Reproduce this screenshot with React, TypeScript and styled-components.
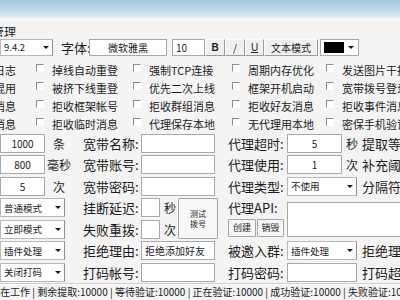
import React from 'react'
import styled, { createGlobalStyle } from 'styled-components'

const FONT = '"Noto Sans CJK SC", "Noto Sans", sans-serif'

const GlobalStyle = createGlobalStyle`
  html, body {
    margin: 0;
    padding: 0;
  }
  body {
    width: 400px;
    height: 300px;
    overflow: hidden;
    background: #f4f4f4;
    font-family: ${FONT};
    color: #1c1c1c;
  }
`

const Window = styled.div`
  width: 400px;
  height: 300px;
  overflow: hidden;
  display: flex;
  flex-direction: column;
`

const TitleBar = styled.div`
  flex: none;
  height: 18px;
  background: linear-gradient(to bottom, #a7c8e0 0%, #bdd7ea 50%, #e4eef6 100%);
`

// text whose start is cut by the window's left edge
const Clipped = styled.div<{ $w: number }>`
  width: ${(p) => p.$w}px;
  display: flex;
  justify-content: flex-end;
  overflow: hidden;
  white-space: nowrap;
`

const GroupTitle = styled(Clipped)`
  margin-top: 7px;
  height: 14px;
  line-height: 14px;
  font-size: 12px;
`

const Toolbar = styled.div`
  margin-top: 2px;
  height: 17px;
  display: flex;
  align-items: stretch;
`

const ToolCaption = styled.div`
  width: 28px;
  margin-left: 8px;
  font-size: 13px;
  line-height: 17px;
  white-space: nowrap;
`

const Field = styled.div<{ $w: number; $h?: number; $center?: boolean; $ml?: number }>`
  box-sizing: border-box;
  flex: none;
  width: ${(p) => p.$w}px;
  height: ${(p) => p.$h ?? 19}px;
  margin-left: ${(p) => p.$ml ?? 0}px;
  padding: 0 3px;
  display: flex;
  align-items: center;
  justify-content: ${(p) => (p.$center ? 'center' : 'flex-start')};
  background: #fff;
  border: 1px solid #a9a9a9;
  font-size: 10px;
  white-space: nowrap;
  overflow: hidden;
`

const ComboBox = styled.div<{ $w: number; $h?: number }>`
  box-sizing: border-box;
  flex: none;
  width: ${(p) => p.$w}px;
  height: ${(p) => p.$h ?? 19}px;
  padding-left: 3px;
  display: flex;
  align-items: center;
  background: #fff;
  border: 1px solid #b9b9b9;
  border-right-color: #8f8f8f;
  font-size: 9.5px;
`

const ComboText = styled.span`
  flex: 1;
  white-space: nowrap;
  overflow: hidden;
`

const ComboArrow = styled.span`
  flex: none;
  width: 13px;
  height: 100%;
  display: flex;
  align-items: center;
  justify-content: center;
  &::after {
    content: '';
    border-left: 3px solid transparent;
    border-right: 3px solid transparent;
    border-top: 3px solid #1a1a1a;
  }
`

const Combo = ({ w, h, children }: { w: number; h?: number; children?: React.ReactNode }) => (
  <ComboBox $w={w} $h={h}>
    <ComboText>{children}</ComboText>
    <ComboArrow />
  </ComboBox>
)

const ToolButton = styled.div<{ $w: number; $bold?: boolean; $underline?: boolean }>`
  box-sizing: border-box;
  flex: none;
  width: ${(p) => p.$w}px;
  display: flex;
  align-items: center;
  justify-content: center;
  border: 1px solid;
  border-color: #fbfbfb #9c9c9c #9c9c9c #fbfbfb;
  background: #f0f0f0;
  font-family: ${(p) => (p.$bold || p.$underline ? '"Liberation Sans", sans-serif' : FONT)};
  font-size: 10px;
  font-weight: ${(p) => (p.$bold ? 700 : 400)};
  text-decoration: ${(p) => (p.$underline ? 'underline' : 'none')};
`

const ColorPicker = styled.div`
  box-sizing: border-box;
  flex: none;
  width: 39px;
  margin-left: 2px;
  padding: 2px 0 2px 3px;
  display: flex;
  align-items: stretch;
  background: #fff;
  border: 1px solid #a9a9a9;
`

const Swatch = styled.span`
  width: 20px;
  background: #000;
`

const OptionGrid = styled.div`
  margin-top: 5px;
  display: grid;
  grid-template-columns: 36px 97px 99px 94px 1fr;
  grid-auto-rows: 18px;
  align-items: center;
  font-size: 11px;
`

const Option = styled.label`
  display: flex;
  align-items: center;
  white-space: nowrap;
`

const Check = styled.span`
  box-sizing: border-box;
  flex: none;
  width: 8px;
  height: 8px;
  margin: -3px 8px 0 0;
  background: #fff;
  border: 1px solid;
  border-color: #8c8c8c #fff #fff #8c8c8c;
`

const Form = styled.div`
  display: grid;
  grid-template-columns: 83px 58px 87px 59px 75px 1fr;
  grid-template-rows: repeat(7, 21.5px);
  align-items: center;
`

const Caption = styled.div`
  font-size: 13px;
  white-space: nowrap;
`

const InputGroup = styled.div`
  display: flex;
  align-items: center;
`

const LeftUnit = styled.span`
  width: 28px;
  text-align: center;
  font-size: 12px;
`

const Unit = styled.span`
  margin-left: 4px;
  font-size: 12px;
  white-space: nowrap;
`

const DialCell = styled.div`
  grid-row: span 2;
  align-self: stretch;
  display: flex;
  align-items: center;
`

const DialFields = styled.div`
  width: 37px;
  height: 100%;
  display: flex;
  flex-direction: column;
  justify-content: space-around;
`

const PlainButton = styled.div<{ $w: number; $h: number }>`
  box-sizing: border-box;
  flex: none;
  width: ${(p) => p.$w}px;
  height: ${(p) => p.$h}px;
  display: flex;
  align-items: center;
  justify-content: center;
  text-align: center;
  background: #f7f7f7;
  border: 1px solid #a6a6a6;
  border-radius: 1px;
`

const DialButton = styled(PlainButton)`
  font-size: 8px;
  line-height: 10px;
`

const ApiButtons = styled.div`
  display: flex;
  gap: 1px;
  margin-top: -3px;
  font-size: 9px;
`

const ApiBox = styled.div`
  grid-row: span 2;
  grid-column: span 2;
  align-self: stretch;
  box-sizing: border-box;
  width: 140px;
  margin: 5px 0 3px;
  background: #fff;
  border: 1px solid #a9a9a9;
`

const Overflow = styled.div`
  font-size: 13px;
  white-space: nowrap;
`

const StatusBar = styled.div`
  border-top: 1px solid #cfcfcf;
  box-shadow: inset 0 1px #fdfdfd;
  height: 16px;
  line-height: 16px;
  font-size: 10px;
  white-space: nowrap;
  color: #222;
`

const options = [
  ['记录日志', '掉线自动重登', '强制TCP连接', '周期内存优化', '发送图片干扰'],
  ['协议混用', '被挤下线重登', '优先二次上线', '框架开机启动', '宽带拨号登录'],
  ['屏蔽消息', '拒收框架帐号', '拒收群组消息', '拒收好友消息', '拒收事件消息'],
  ['转发消息', '拒收临时消息', '代理保存本地', '无代理用本地', '密保手机验证'],
]

export default function App() {
  return (
    <>
      <GlobalStyle />
      <Window>
        <TitleBar />
        <GroupTitle $w={16}>框架管理</GroupTitle>
        <Toolbar>
          <Combo w={53} h={17}>
            9.4.2
          </Combo>
          <ToolCaption>字体:</ToolCaption>
          <Field $w={78} $h={17} $center>
            微软雅黑
          </Field>
          <Field $w={33} $h={17} $ml={5}>
            10
          </Field>
          <ToolButton $w={20} $bold>
            B
          </ToolButton>
          <ToolButton $w={20}>/</ToolButton>
          <ToolButton $w={19} $underline>
            U
          </ToolButton>
          <ToolButton $w={54}>文本模式</ToolButton>
          <ColorPicker>
            <Swatch />
            <ComboArrow />
          </ColorPicker>
        </Toolbar>

        <OptionGrid>
          {options.map(([lead, ...rest]) => (
            <React.Fragment key={lead}>
              <Clipped $w={16}>{lead}</Clipped>
              {rest.map((label) => (
                <Option key={label}>
                  <Check />
                  {label}
                </Option>
              ))}
            </React.Fragment>
          ))}
        </OptionGrid>

        <Form>
          {/* row 1 */}
          <InputGroup>
            <Field $w={45} $center>
              1000
            </Field>
            <LeftUnit>条</LeftUnit>
          </InputGroup>
          <Caption>宽带名称:</Caption>
          <Field $w={74} />
          <Caption>代理超时:</Caption>
          <InputGroup>
            <Field $w={55} $center>
              5
            </Field>
            <Unit>秒</Unit>
          </InputGroup>
          <Overflow>提取等待:</Overflow>

          {/* row 2 */}
          <InputGroup>
            <Field $w={45} $center>
              800
            </Field>
            <LeftUnit>毫秒</LeftUnit>
          </InputGroup>
          <Caption>宽带账号:</Caption>
          <Field $w={74} />
          <Caption>代理使用:</Caption>
          <InputGroup>
            <Field $w={55} $center>
              1
            </Field>
            <Unit>次</Unit>
          </InputGroup>
          <Overflow>补充阈值:</Overflow>

          {/* row 3 */}
          <InputGroup>
            <Field $w={45} $center>
              5
            </Field>
            <LeftUnit>次</LeftUnit>
          </InputGroup>
          <Caption>宽带密码:</Caption>
          <Field $w={74} />
          <Caption>代理类型:</Caption>
          <Combo w={70}>不使用</Combo>
          <Overflow>分隔符:</Overflow>

          {/* rows 4 and 5 */}
          <Combo w={65}>普通模式</Combo>
          <Caption>挂断延迟:</Caption>
          <DialCell>
            <DialFields>
              <InputGroup>
                <Field $w={19} />
                <Unit>秒</Unit>
              </InputGroup>
              <InputGroup>
                <Field $w={19} />
                <Unit>次</Unit>
              </InputGroup>
            </DialFields>
            <DialButton $w={40} $h={41}>
              测试
              <br />
              拨号
            </DialButton>
          </DialCell>
          <Caption>代理API:</Caption>
          <ApiBox />
          <Combo w={65}>立即模式</Combo>
          <Caption>失败重拨:</Caption>
          <ApiButtons>
            <PlainButton $w={28} $h={18}>
              创建
            </PlainButton>
            <PlainButton $w={27} $h={18}>
              销毁
            </PlainButton>
          </ApiButtons>

          {/* row 6 */}
          <Combo w={65}>插件处理</Combo>
          <Caption>拒绝理由:</Caption>
          <Field $w={74}>拒绝添加好友</Field>
          <Caption>被邀入群:</Caption>
          <Combo w={70}>插件处理</Combo>
          <Overflow>拒绝理由:</Overflow>

          {/* row 7 */}
          <Combo w={65}>关闭打码</Combo>
          <Caption>打码帐号:</Caption>
          <Field $w={74} />
          <Caption>打码密码:</Caption>
          <Field $w={70} />
          <Overflow>打码超时:</Overflow>
        </Form>

        <StatusBar>
          在工作 | 剩余提取:10000 | 等待验证:10000 | 正在验证:10000 | 成功验证:10000 | 失败验证:10000
        </StatusBar>
      </Window>
    </>
  )
}
